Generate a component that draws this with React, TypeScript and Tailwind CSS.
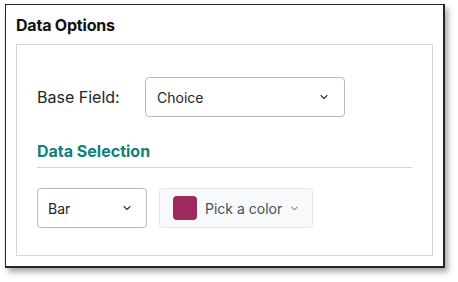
import { ChevronDown } from "lucide-react";

export default function App() {
  return (
    <div className="w-[458px] h-[282px] bg-white pt-[4px] pl-[5px] font-['Inter',sans-serif]">
      <div className="w-[440px] h-[264px] border border-[#262626] border-r-2 border-b-2 bg-white shadow-[3px_4px_6px_rgba(0,0,0,0.35)] px-[10px] pt-[10px]">
        <h2 className="text-[16px] leading-[20px] font-bold text-[#111] tracking-[-0.2px]">Data Options</h2>
        <div className="mt-[9px] h-[212px] border border-[#d3d4d8] px-[20px] pt-[32px]">
          {/* Base field row */}
          <div className="flex items-center">
            <span className="w-[108px] text-[16px] text-[#212529]">Base Field:</span>
            <button className="w-[200px] h-[40px] rounded-[4px] border border-[#b9bbc0] flex items-center justify-between pl-[11px] pr-[14px] text-[14px] text-[#212529]">
              Choice
              <ChevronDown className="w-[12px] h-[12px] text-[#333]" strokeWidth={2.2} />
            </button>
          </div>

          <h3 className="mt-[22px] pb-[4px] border-b border-[#d3d4d8] text-[16px] leading-[24px] font-bold text-[#10807b]">
            Data Selection
          </h3>

          {/* Selection row */}
          <div className="mt-[20px] flex items-center gap-[12px]">
            <button className="w-[110px] h-[40px] rounded-[4px] border border-[#b9bbc0] flex items-center justify-between pl-[10px] pr-[13px] text-[14px] text-[#212529]">
              Bar
              <ChevronDown className="w-[12px] h-[12px] text-[#333]" strokeWidth={2.2} />
            </button>
            <button className="w-[154px] h-[40px] rounded-[4px] border border-[#e4e6ea] bg-[#f8f9fa] flex items-center pl-[13px] text-[14px] text-[#495057]">
              <span className="w-[24px] h-[24px] rounded-[4px] bg-[#9c2a5f]" />
              <span className="ml-[8px]">Pick a color</span>
              <ChevronDown className="ml-[7px] w-[11px] h-[11px] text-[#495057]" strokeWidth={2} />
            </button>
          </div>
        </div>
      </div>
    </div>
  );
}
